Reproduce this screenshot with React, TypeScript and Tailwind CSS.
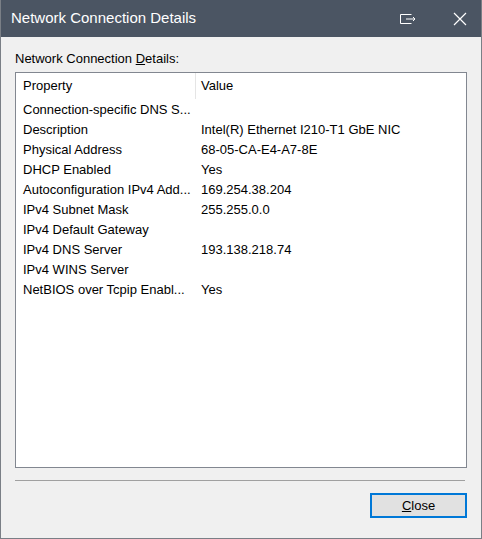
const rows: [string, string][] = [
  ["Connection-specific DNS S...", ""],
  ["Description", "Intel(R) Ethernet I210-T1 GbE NIC"],
  ["Physical Address", "68-05-CA-E4-A7-8E"],
  ["DHCP Enabled", "Yes"],
  ["Autoconfiguration IPv4 Add...", "169.254.38.204"],
  ["IPv4 Subnet Mask", "255.255.0.0"],
  ["IPv4 Default Gateway", ""],
  ["IPv4 DNS Server", "193.138.218.74"],
  ["IPv4 WINS Server", ""],
  ["NetBIOS over Tcpip Enabl...", "Yes"],
];

export default function App() {
  return (
    <div className="w-[482px] h-[539px] flex flex-col bg-[#f0f0f0] border border-t-0 border-[#7a7f86] text-[13px] text-black" style={{ fontFamily: '"Liberation Sans", Arial, sans-serif' }}>
      <div className="h-[37px] shrink-0 bg-[#4b5563] flex items-center pl-[10px] text-white text-[15px]">
        <span className="flex-1">Network Connection Details</span>
        <svg width="18" height="12" viewBox="0 0 18 12" className="mr-[36px]" fill="none" stroke="white" strokeWidth="1">
          <path d="M1.5 1.5h11M1.5 1.5v9h11M7 6h9M14 4l2 2-2 2" />
        </svg>
        <svg width="14" height="14" viewBox="0 0 14 14" className="mr-[14px]" stroke="white" strokeWidth="1.2">
          <path d="M1 1l12 12M13 1L1 13" />
        </svg>
      </div>
      <div className="px-[14px] pt-[14px] flex flex-col flex-1">
        <div className="leading-[15px] mb-[6px]">Network Connection <span className="underline">D</span>etails:</div>
        <div className="h-[396px] bg-white border border-[#828790] flex flex-col">
          <div className="flex h-[26px] items-center">
            <div className="w-[180px] pl-[7px] border-r border-[#e5e5e5] h-full flex items-center">Property</div>
            <div className="pl-[5px]">Value</div>
          </div>
          <div className="pt-[1px]">
            {rows.map(([k, v]) => (
              <div key={k} className="flex h-[20px] items-center">
                <div className="w-[180px] pl-[7px] whitespace-nowrap overflow-hidden">{k}</div>
                <div className="pl-[5px] whitespace-nowrap">{v}</div>
              </div>
            ))}
          </div>
        </div>
        <div className="mt-[12px] h-px bg-[#a0a0a0] mr-[2px]" />
        <div className="flex justify-end mt-[12px]">
          <button className="w-[97px] h-[25px] bg-[#e1e1e1] border-2 border-[#0078d7] flex items-center justify-center">
            <span><span className="underline">C</span>lose</span>
          </button>
        </div>
      </div>
    </div>
  );
}
